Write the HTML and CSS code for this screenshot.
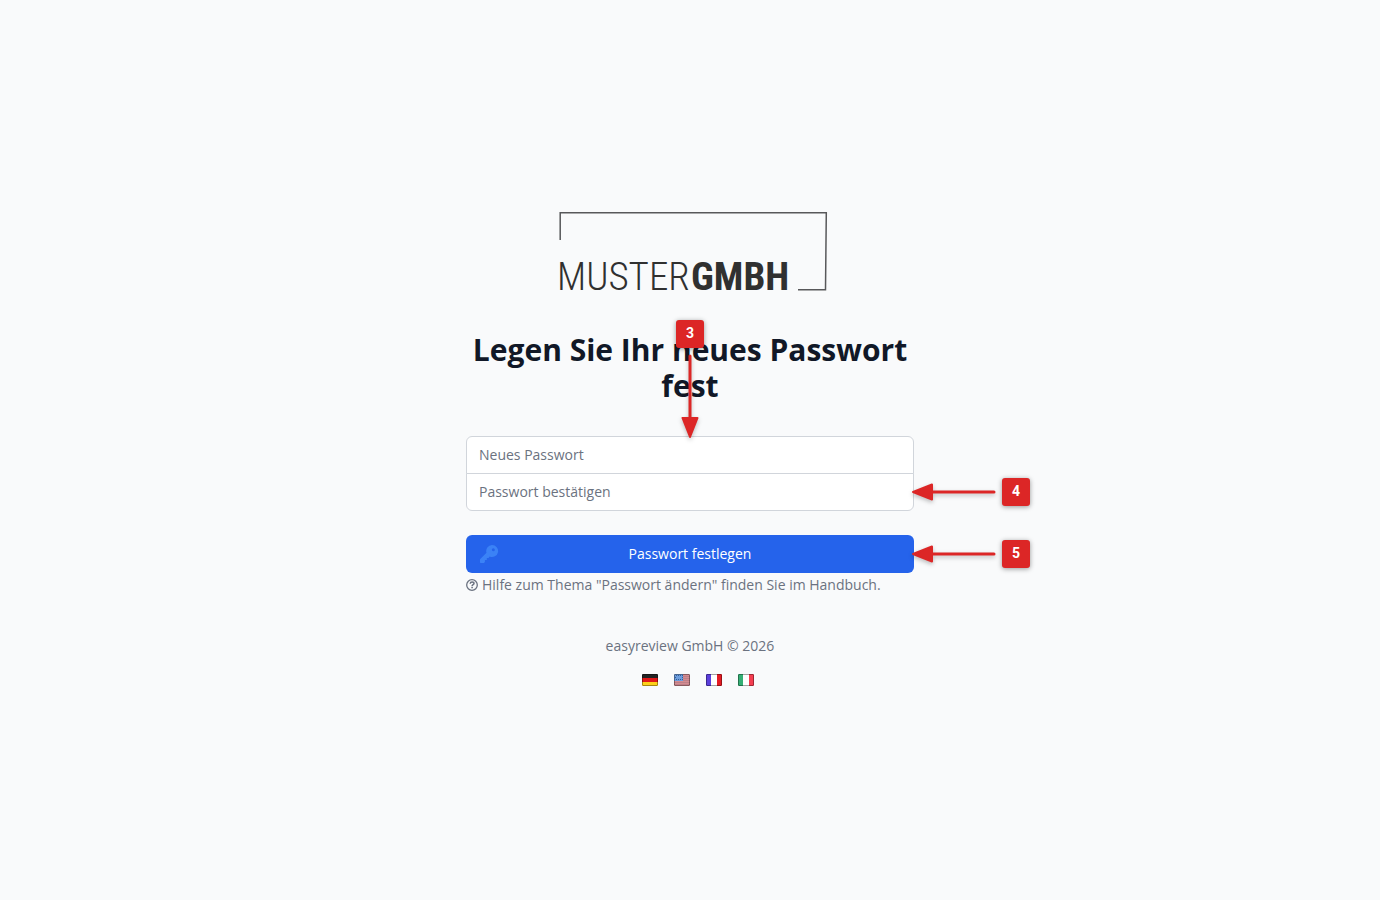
FILE: index.html
```html
<!DOCTYPE html>
<html lang="de">
<head>
<meta charset="utf-8">
<meta name="viewport" content="width=device-width, initial-scale=1">
<title>Passwort festlegen</title>
<link rel="stylesheet" href="styles.css">
</head>
<body>
<main class="page">
  <div class="card">
    <svg class="logo" viewBox="0 0 276 96" role="img" aria-label="Muster GmbH">
      <path d="M8.200 36V8.800H274.300L273.500 85.800H246" fill="none" stroke="#58585a" stroke-width="1.500"/>
      <text class="logo-text" x="5" y="86"><tspan class="logo-light">MUSTER</tspan><tspan class="logo-bold" x="139">GMBH</tspan></text>
    </svg>
    <div class="heading">
      <h1 class="title">Legen Sie Ihr neues Passwort fest</h1>
    </div>
    <form class="form">
      <div class="fields">
        <div class="marked">
          <input class="field field-top" type="password" aria-label="Neues Passwort" placeholder="Neues Passwort">
          <div class="marker marker-down">
            <span class="badge">3</span>
            <svg class="arrow-down" viewBox="0 0 24 91" aria-hidden="true"><path d="M12 8V71" stroke="#dc2626" stroke-width="3" stroke-linecap="round"/><path d="M4.500 70H19.500L12 89Z" fill="#dc2626" stroke="#dc2626" stroke-width="2" stroke-linejoin="round"/></svg>
          </div>
        </div>
        <div class="marked">
          <input class="field field-bottom" type="password" aria-label="Passwort bestätigen" placeholder="Passwort bestätigen">
          <div class="marker marker-left">
            <svg class="arrow-left" viewBox="0 0 91 24" aria-hidden="true"><path d="M20 12H83" stroke="#dc2626" stroke-width="3" stroke-linecap="round"/><path d="M21 4.500V19.500L2 12Z" fill="#dc2626" stroke="#dc2626" stroke-width="2" stroke-linejoin="round"/></svg>
            <span class="badge">4</span>
          </div>
        </div>
      </div>
      <div class="marked">
        <button class="submit" type="submit">
          <svg class="key" viewBox="0 0 20 20" aria-hidden="true"><path fill-rule="evenodd" fill="#3b82f6" d="M13 1a6 6 0 1 1-2.300 11.500L9.500 14H7.800v2H5.900v2l-1 .9H1.500L1 18.400V15.300L7.500 8.800A6 6 0 0 1 13 1zM14.300 4.200a1.500 1.500 0 1 0 .01 3 1.500 1.500 0 0 0 0-3z"/></svg>
          Passwort festlegen
        </button>
        <div class="marker marker-left">
          <svg class="arrow-left" viewBox="0 0 91 24" aria-hidden="true"><path d="M20 12H83" stroke="#dc2626" stroke-width="3" stroke-linecap="round"/><path d="M21 4.500V19.500L2 12Z" fill="#dc2626" stroke="#dc2626" stroke-width="2" stroke-linejoin="round"/></svg>
          <span class="badge">5</span>
        </div>
      </div>
    </form>
    <a class="help" href="#handbuch">
      <svg class="help-icon" viewBox="0 0 12 12" aria-hidden="true"><circle cx="6" cy="6" r="5.300" fill="none" stroke="currentColor" stroke-width="1.300"/><path d="M4.200 4.700C4.300 3.500 5.100 3 6.100 3c1.100 0 1.900.6 1.900 1.500C8 5.700 6.100 5.700 6.100 7" fill="none" stroke="currentColor" stroke-width="1.500"/><path d="M5.300 7.800h1.600v1.400H5.300z" fill="currentColor"/></svg>
      Hilfe zum Thema "Passwort ändern" finden Sie im Handbuch.
    </a>
    <footer class="footer">
      <p class="copyright">easyreview GmbH © 2026</p>
      <nav class="languages" aria-label="Sprache">
        <a class="language" href="#de" aria-label="Deutsch"><svg class="flag" viewBox="0 0 16 12"><path fill="#222" d="M0 0h16v4H0z"/><path fill="#e01818" d="M0 4h16v4H0z"/><path fill="#fdd019" d="M0 8h16v4H0z"/><rect class="flag-edge" x=".5" y=".5" width="15" height="11" rx=".5"/></svg></a>
        <a class="language" href="#en" aria-label="English"><svg class="flag" viewBox="0 0 16 12"><path fill="#d58b91" d="M0 0h16v12H0z"/><path stroke="#bd8088" d="M0 2.500h16M0 4.500h16M0 6.500h16M0 8.500h16M0 10.500h16"/><path fill="#6d9ddd" d="M0 0h9v7H0z"/><path d="M2 1.500h7M2 5.500h7M1 3.500h1M8 3.500h1" stroke="#315f9d" stroke-dasharray="1 1"/><rect class="flag-edge" x=".5" y=".5" width="15" height="11" rx=".5"/></svg></a>
        <a class="language" href="#fr" aria-label="Français"><svg class="flag" viewBox="0 0 16 12"><path fill="#5b3fdc" d="M0 0h5v12H0z"/><path fill="#fff" d="M5 0h6v12H5z"/><path fill="#e51b23" d="M11 0h5v12h-5z"/><rect class="flag-edge" x=".5" y=".5" width="15" height="11" rx=".5"/></svg></a>
        <a class="language" href="#it" aria-label="Italiano"><svg class="flag" viewBox="0 0 16 12"><path fill="#35af75" d="M0 0h5v12H0z"/><path fill="#fff" d="M5 0h6v12H5z"/><path fill="#f53e50" d="M11 0h5v12h-5z"/><rect class="flag-edge" x=".5" y=".5" width="15" height="11" rx=".5"/></svg></a>
      </nav>
    </footer>
  </div>
</main>
</body>
</html>
```

FILE: styles.css
```css
* { box-sizing: border-box; }

body {
  margin: 0;
  background: #f9fafb;
  color: #6b7280;
  font-family: "Open Sans", "Noto Sans", sans-serif;
  font-size: 14px;
  line-height: 20px;
  text-rendering: optimizeSpeed;
}

.page {
  min-height: 100vh;
  display: flex;
  align-items: center;
  justify-content: center;
  padding: 48px 16px;
}

.card {
  width: 100%;
  max-width: 448px;
}

.logo {
  display: block;
  width: 276px;
  height: 96px;
  margin: 0 auto;
}

.logo-text {
  fill: #303030;
  font-family: "Roboto Condensed", "Open Sans Condensed", "Liberation Sans Narrow", "Roboto", sans-serif;
  font-size: 39px;
}

.logo-light { font-weight: 300; }
.logo-bold { font-weight: 700; }

.heading { margin-top: 32px; }

.title {
  margin: 0;
  color: #111827;
  font-size: 30px;
  font-weight: 700;
  line-height: 36px;
  text-align: center;
}

.form { margin-top: 32px; }
.fields { margin-bottom: 24px; }
.marked { position: relative; }

.field {
  display: block;
  width: 100%;
  height: 38px;
  padding: 7px 12px 9px;
  border: 1px solid #d1d5db;
  background: #fff;
  color: #111827;
  font: inherit;
  text-rendering: inherit;
}

.field::placeholder { color: #6b7280; opacity: 1; }
.field-top { border-radius: 6px 6px 0 0; }
.field-bottom { margin-top: -1px; border-radius: 0 0 6px 6px; }

.submit {
  position: relative;
  display: block;
  width: 100%;
  padding: 8px 16px;
  border: 1px solid transparent;
  border-radius: 6px;
  background: #2563eb;
  color: #fff;
  font: inherit;
  text-rendering: inherit;
  cursor: pointer;
}

.key {
  position: absolute;
  left: 12px;
  top: 8px;
  width: 20px;
  height: 20px;
}

.marker {
  position: absolute;
  z-index: 1;
  display: flex;
  align-items: center;
  pointer-events: none;
}

.marker-down {
  flex-direction: column;
  bottom: 100%;
  left: 50%;
  margin: 0 0 -3px -14px;
}

.marker-left {
  left: 100%;
  top: 50%;
  margin: -14px 0 0 -3px;
}

.badge {
  width: 28px;
  height: 28px;
  border-radius: 3px;
  background: #dc2626;
  box-shadow: 0 1px 5px rgba(0, 0, 0, 0.4);
  color: #fff;
  font-family: "Roboto", sans-serif;
  font-size: 14px;
  font-weight: 700;
  line-height: 27px;
  text-align: center;
}

.arrow-down,
.arrow-left {
  display: block;
  filter: drop-shadow(0 2px 2px rgba(0, 0, 0, 0.25));
}

.arrow-down { width: 24px; height: 91px; }
.arrow-left { width: 91px; height: 24px; }

.help {
  display: flex;
  align-items: center;
  gap: 4px;
  margin-top: 2px;
  color: inherit;
  text-decoration: none;
}

.help-icon {
  flex: none;
  width: 12px;
  height: 12px;
}

.footer {
  margin-top: 41px;
  text-align: center;
}

.copyright { margin: 0; }

.languages {
  display: flex;
  justify-content: center;
  gap: 16px;
  margin-top: 18px;
  padding: 0 0 10px 16px;
}

.language, .flag { display: block; }

.flag {
  width: 16px;
  height: 12px;
  border-radius: 1px;
}

.flag-edge {
  fill: none;
  stroke: #000;
  stroke-opacity: 0.35;
}
```
